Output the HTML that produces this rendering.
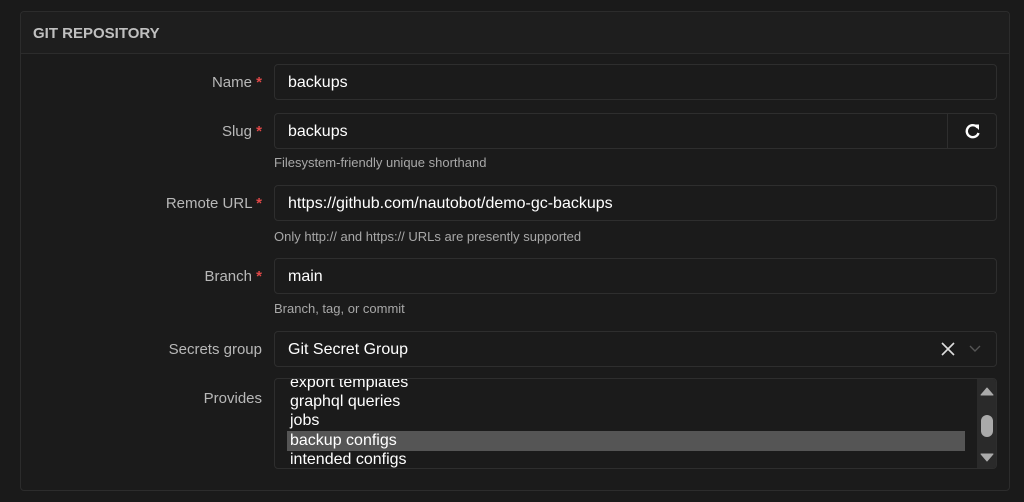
<!DOCTYPE html>
<html><head><style>
body{margin:0;width:1024px;height:502px;background:#1a1a1a;font-family:"Liberation Sans","DejaVu Sans",sans-serif;overflow:hidden;position:relative}
.panel{position:absolute;left:20px;top:11px;width:988px;height:478px;border:1px solid #2c2c2c;border-radius:4px;background:#1b1b1b}
.hdr{position:absolute;left:0;top:0;right:0;height:41px;border-bottom:1px solid #2c2c2c;background:#1e1e1e;border-radius:4px 4px 0 0}
.hdr span{position:absolute;left:12px;top:13px;color:#c0c0c0;font-weight:bold;font-size:15px}
.lbl{position:absolute;right:762px;color:#b8b8b8;font-size:15px;text-align:right;white-space:nowrap}
.lbl b{color:#e04848;font-weight:bold}
.inp{position:absolute;left:274px;width:723px;height:35px;border:1px solid #2e2e2e;border-radius:4px;background:#1b1b1b;color:#fff;font-size:16px;box-sizing:border-box;padding:9px 0 0 13px;white-space:nowrap}
.help{position:absolute;left:274px;color:#a8a8a8;font-size:13px}
.btn{position:absolute;left:947px;top:113px;width:50px;height:36px;border:1px solid #2e2e2e;border-radius:0 4px 4px 0;box-sizing:border-box}
.list{position:absolute;left:274px;top:378px;width:723px;height:91px;border:1px solid #2e2e2e;border-radius:4px;box-sizing:border-box;overflow:hidden}
.it{position:absolute;left:15px;color:#fff;font-size:16px}
</style></head><body>
<div class="panel"><div class="hdr"><span>GIT REPOSITORY</span></div></div>

<div class="lbl" style="top:74px">Name <b>*</b></div>
<div class="inp" style="top:64px;height:36px">backups</div>

<div class="lbl" style="top:123px">Slug <b>*</b></div>
<div class="inp" style="top:113px;width:674px;height:36px;border-radius:4px 0 0 4px">backups</div>
<div class="btn"><svg width="48" height="34" viewBox="0 0 48 34"><path d="M29.5 13.5A6 6 0 1 0 30.5 19" fill="none" stroke="#fff" stroke-width="2.4"/><path d="M25.5 10.5L31 10.5L31 16z" fill="#fff"/></svg></div>
<div class="help" style="top:155px">Filesystem-friendly unique shorthand</div>

<div class="lbl" style="top:195px">Remote URL <b>*</b></div>
<div class="inp" style="top:185px;height:36px">https://github.com/nautobot/demo-gc-backups</div>
<div class="help" style="top:229px">Only http:// and https:// URLs are presently supported</div>

<div class="lbl" style="top:268px">Branch <b>*</b></div>
<div class="inp" style="top:258px;height:36px">main</div>
<div class="help" style="top:301px">Branch, tag, or commit</div>

<div class="lbl" style="top:341px">Secrets group</div>
<div class="inp" style="top:331px;height:36px">Git Secret Group
<svg style="position:absolute;left:666px;top:10px" width="14" height="14"><path d="M1 1L13 13M13 1L1 13" stroke="#ddd" stroke-width="1.6"/></svg>
<svg style="position:absolute;left:694px;top:13px" width="12" height="8"><path d="M1 1L6 6L11 1" stroke="#555" stroke-width="1.4" fill="none"/></svg>
</div>

<div class="lbl" style="top:390px">Provides</div>
<div class="list">
<div style="position:absolute;left:12px;top:52px;width:678px;height:20px;background:#555"></div>
<div class="it" style="top:-5px">export templates</div>
<div class="it" style="top:14px">graphql queries</div>
<div class="it" style="top:33px">jobs</div>
<div class="it" style="top:53px">backup configs</div>
<div class="it" style="top:72px">intended configs</div>
<div style="position:absolute;left:702px;top:0;width:20px;height:89px;background:#2a2a2a"></div>
<svg style="position:absolute;left:702px;top:0" width="20" height="89"><path d="M4 16L10 9L16 16z" fill="#aaa" stroke="#aaa" stroke-linejoin="round"/><rect x="4" y="36" width="12" height="22" rx="6" fill="#aaa"/><path d="M4 75L10 82L16 75z" fill="#aaa" stroke="#aaa" stroke-linejoin="round"/></svg>
</div>
</body></html>
